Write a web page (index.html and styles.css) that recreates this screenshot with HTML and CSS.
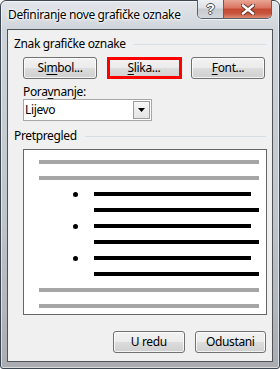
FILE: index.html
```html
<!DOCTYPE html>
<html>
<head>
<meta charset="utf-8">
<link rel="stylesheet" href="styles.css">
</head>
<body>
<div class="window">
  <div class="titlebar">
    <span class="title">Definiranje nove grafičke oznake</span>
    <div class="caption-btns">
      <div class="cbtn help">?</div>
      <div class="cbtn close">
        <svg width="14" height="11" viewBox="0 0 14 11">
          <path d="M2 1.5 L12 9.5 M12 1.5 L2 9.5" stroke="#5a2a22" stroke-width="4.2" stroke-linecap="square"/>
          <path d="M2 1.5 L12 9.5 M12 1.5 L2 9.5" stroke="#ffffff" stroke-width="2.4" stroke-linecap="square"/>
        </svg>
      </div>
    </div>
  </div>
  <div class="client">
    <div class="group-head"><span>Znak grafičke oznake</span><div class="rule"></div></div>
    <div class="btn-row">
      <button class="btn">Si<u>m</u>bol...</button>
      <div class="hl"><button class="btn"><u>S</u>lika...</button></div>
      <button class="btn"><u>F</u>ont...</button>
    </div>
    <div class="field-label">Pora<u>v</u>nanje:</div>
    <div class="combo">
      <span class="combo-text">Lijevo</span>
      <div class="drop"><svg width="7" height="4" viewBox="0 0 7 4"><path d="M0 0 H7 L3.5 4 Z" fill="#000"/></svg></div>
    </div>
    <div class="group-head g2"><span>Pretpregled</span><div class="rule"></div></div>
    <div class="preview">
      <div class="ln gray"></div>
      <div class="ln gray"></div>
      <div class="brow"><span class="dot"></span><div class="ln black short"></div></div>
      <div class="ln black long"></div>
      <div class="brow"><span class="dot"></span><div class="ln black short"></div></div>
      <div class="ln black long"></div>
      <div class="brow"><span class="dot"></span><div class="ln black short"></div></div>
      <div class="ln black long"></div>
      <div class="ln gray"></div>
      <div class="ln gray"></div>
    </div>
    <div class="footer">
      <button class="btn">U redu</button>
      <button class="btn">Odustani</button>
    </div>
  </div>
</div>
</body>
</html>
```

FILE: styles.css
```css
* { box-sizing: border-box; }
html, body { margin: 0; padding: 0; }
body {
  width: 280px;
  height: 369px;
  overflow: hidden;
  background: #ffffff;
  font-family: "Noto Sans", "Open Sans", sans-serif;
  font-size: 12px;
  letter-spacing: -0.35px;
  color: #000;
}
.window {
  width: 280px;
  height: 369px;
  border: 1px solid #3c4650;
  border-radius: 6px 6px 3px 3px;
  background: linear-gradient(#e2e6eb 0%, #cfd4da 30px, #bfc4ca 60%, #a9adb2 100%);
  box-shadow: inset 0 0 0 1px rgba(255,255,255,0.55);
  display: flex;
  flex-direction: column;
}
.titlebar {
  height: 28px;
  display: flex;
  align-items: flex-start;
  padding-left: 7px;
}
.title {
  padding-top: 6px;
  line-height: 16px;
  text-shadow: 0 0 5px #ffffff, 0 0 3px #ffffff, 0 0 2px #ffffff;
}
.caption-btns {
  margin-left: auto;
  margin-right: 7px;
  margin-top: -1px;
  display: flex;
  height: 19px;
  border: 1px solid #59626c;
  border-top: none;
  border-radius: 0 0 5px 5px;
  overflow: hidden;
  box-shadow: 0 1px 0 rgba(255,255,255,0.6);
}
.cbtn {
  height: 18px;
  display: flex;
  align-items: center;
  justify-content: center;
}
.help {
  width: 26px;
  border-right: 1px solid #59626c;
  background: linear-gradient(#eef0f3 0%, #dde0e4 45%, #c6cbd0 50%, #d3d7dc 100%);
  color: #ffffff;
  font-family: "Liberation Sans", sans-serif;
  font-weight: bold;
  font-size: 14px;
  letter-spacing: 0;
  text-shadow: 1px 0 0 #4a4f55, -1px 0 0 #4a4f55, 0 1px 0 #4a4f55, 0 -1px 0 #4a4f55;
}
.close {
  width: 47px;
  background: linear-gradient(#eaa695 0%, #d8735f 45%, #c44a32 50%, #c8543c 75%, #dc8c74 100%);
}
.client {
  flex: 1;
  margin: 0 6px 6px;
  border: 1px solid #4e5358;
  background: #f0f0f0;
  padding: 0 6px;
  display: flex;
  flex-direction: column;
}
.group-head {
  margin-top: 6px;
  display: flex;
  align-items: center;
  height: 16px;
  line-height: 16px;
}
.group-head .rule {
  flex: 1;
  height: 1px;
  background: #d5dfe5;
  margin-left: 8px;
}
.group-head.g2 { margin-top: 7px; }
.btn-row {
  margin-top: 5px;
  margin-left: 9px;
  display: flex;
  gap: 10px;
}
.btn {
  width: 74px;
  height: 22px;
  padding: 0;
  border: 1px solid #707070;
  border-radius: 3px;
  background: linear-gradient(#f2f2f2 0%, #ebebeb 50%, #dddddd 51%, #cfcfcf 100%);
  box-shadow: inset 0 0 0 1px rgba(255,255,255,0.75);
  font: inherit;
  letter-spacing: inherit;
  color: #000;
  line-height: 20px;
}
.btn u, .field-label u { text-underline-offset: 2px; }
.hl { position: relative; display: flex; }
.hl::after {
  content: "";
  position: absolute;
  inset: 0 -1px 0 0;
  border: 3px solid #ff0000;
}
.field-label {
  margin-top: 6px;
  margin-left: 9px;
  line-height: 14px;
}
.combo {
  margin-left: 9px;
  width: 129px;
  height: 22px;
  border: 1px solid #a6a6a6;
  background: #ffffff;
  display: flex;
}
.combo-text {
  flex: 1;
  padding-left: 1px;
  line-height: 20px;
}
.drop {
  width: 17px;
  margin: 1px;
  border: 1px solid #9c9c9c;
  background: linear-gradient(#f7f7f7, #e4e4e4);
  display: flex;
  align-items: center;
  justify-content: center;
}
.preview {
  margin-top: 5px;
  margin-left: 9px;
  width: 244px;
  height: 166px;
  border: 1px solid #666666;
  background: #ffffff;
  padding: 10px 0 0;
  display: flex;
  flex-direction: column;
  gap: 12px;
}
.ln { height: 4px; }
.gray { background: #a6a6a6; margin-left: 15px; width: 220px; }
.black { background: #000000; }
.long { margin-left: 70px; width: 165px; }
.brow {
  height: 4px;
  display: flex;
  align-items: center;
}
.dot {
  width: 5px;
  height: 5px;
  border-radius: 50%;
  background: #000;
  margin-left: 49px;
}
.brow .short { margin-left: 16px; width: 157px; }
.footer {
  margin-top: 16px;
  margin-left: 99px;
  display: flex;
  gap: 10px;
}
```
